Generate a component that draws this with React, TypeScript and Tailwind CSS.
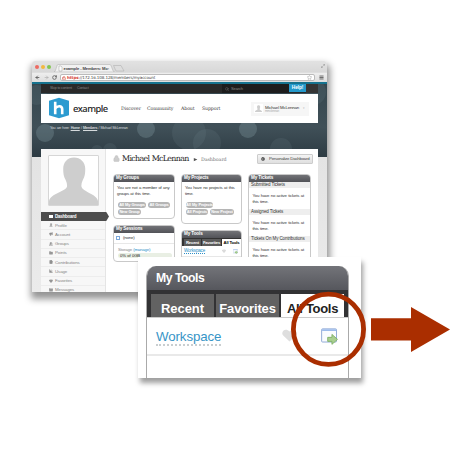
import React from "react";
import { Search, Star, Menu, Lock, Settings, Heart, User, Users, Folder, Megaphone, BarChart3, Mail, FileText, ArrowLeft, ArrowRight, RotateCw, Maximize2 } from "lucide-react";

function Panel({ title, className, children }: { title: string; className?: string; children: React.ReactNode }) {
  return (
    <section className={"overflow-hidden rounded-[4px] border border-[#c9c9c9] bg-white " + (className ?? "")}>
      <h3 className="-mx-px -mt-px h-[8px] bg-linear-to-b from-[#77787c] to-[#525358] pl-[3px] text-[4.6px] leading-[8px] font-bold tracking-[-0.12px] text-white">
        {title}
      </h3>
      {children}
    </section>
  );
}

function Pill({ children, className }: { children: string; className: string }) {
  return (
    <span className={"h-[6px] rounded-full bg-[#b5b5b5] text-center text-[4px] leading-[6px] font-bold tracking-[-0.16px] whitespace-nowrap text-white [word-spacing:0.3px] " + className}>
      {children}
    </span>
  );
}

function LaunchIcon({ className }: { className: string }) {
  return (
    <svg viewBox="0 0 16 16" className={className}>
      <rect x="0.6" y="0.8" width="14" height="12.4" rx="0.8" fill="#fafcff" stroke="#8fa9d6" strokeWidth="0.9" />
      <path d="M1 2h13.2" stroke="#9dbcec" strokeWidth="1.8" />
      <path d="M6.3 8.8h4V6l5.2 4.7-5.2 4.7v-2.8h-4z" fill="#a9cf91" stroke="#7bae60" strokeWidth="0.8" />
    </svg>
  );
}

const sideItems = [
  { name: "Profile", Icon: User },
  { name: "Account", Icon: Megaphone },
  { name: "Groups", Icon: Users },
  { name: "Points", Icon: Folder },
  { name: "Contributions", Icon: FileText },
  { name: "Usage", Icon: BarChart3 },
  { name: "Favorites", Icon: Heart },
  { name: "Messages", Icon: Mail },
];

function Person({ className }: { className: string }) {
  return (
    <svg viewBox="0 0 50 49" preserveAspectRatio="none" className={className}>
      <path d="M0 49v-4c1-4 5-6 9-8 6-3 9-4 9.500-7 0-2-.5-4-1.500-6-2-3-2.500-7-2.500-11C14.500 6 19 1.500 25.500 1.500S37 6 37 13c0 4-.5 8-2.500 11-1 2-1.500 4-1.500 6 .5 3 3 4 8 7 4 2 8 4 9 8v4z" fill="#cecece" />
    </svg>
  );
}

function Chrome() {
  return (
    <div className="h-[21px] bg-linear-to-b from-[#e2e2e2] to-[#cfcfcf]">
      <div className="flex h-[11px] items-end pl-[3px]">
        <div className="mb-[3px] flex gap-[2px]">
          <i className="size-[4px] rounded-full bg-[#ed6b62]" />
          <i className="size-[4px] rounded-full bg-[#f3b93f]" />
          <i className="size-[4px] rounded-full bg-[#84c652]" />
        </div>
        <svg viewBox="0 0 72 9" className="ml-[3px] h-[9px] w-[72px]">
          <path d="M0 9c2 0 2.500-7.500 4-7.500h52c1.500 0 2.500 7.500 4.500 7.500z" fill="#f1f1f1" stroke="#aaa" strokeWidth="0.5" />
          <path d="M59.500 2.500h7.500l3 5.500h-8z" fill="#dedede" stroke="#aaa" strokeWidth="0.5" />
          <path d="M5 3h2l1 1v4H5z" fill="white" stroke="#888" strokeWidth="0.4" />
          <text x="9.500" y="7" fontSize="4.200" letterSpacing="-0.150" fontWeight="bold" fill="#444">example - Members: Mc</text>
          <text x="53" y="7" fontSize="4" fill="#777">×</text>
        </svg>
        <Maximize2 className="mr-[2px] mb-[4px] ml-auto size-[4px] text-[#777]" />
      </div>
      <div className="flex h-[10px] items-center border-t border-[#dedede] bg-linear-to-b from-[#eee] to-[#dedede] px-[3px]">
        <ArrowLeft className="size-[5px] text-[#555]" strokeWidth={4} />
        <ArrowRight className="ml-[4px] size-[5px] text-[#aaa]" strokeWidth={3} />
        <RotateCw className="ml-[3px] size-[5px] text-[#555]" strokeWidth={3.5} />
        <div className="ml-[3px] flex h-[7px] flex-1 items-center rounded-[2px] border-[0.5px] border-[#bbb] bg-white pr-[2px] pl-px font-['DejaVu_Sans'] text-[4.1px] leading-[7px] tracking-[-0.14px] text-[#444]">
          <Lock className="mr-px size-[4px] text-[#d24c43]" strokeWidth={3} />
          <b className="text-[#d7453c]">https</b>
          <span>://172.16.108.128/members/myaccount</span>
          <Star className="ml-auto size-[5px] text-[#888]" />
        </div>
        <Menu className="ml-[4px] size-[5px] text-[#555]" strokeWidth={4} />
      </div>
    </div>
  );
}

function SiteHeader() {
  return (
    <>
      <div className="-mx-[9px] h-[2px] bg-[#16738f]" />
      <div className="flex h-[9px] bg-[#292929] pl-[9px] text-[3.6px] leading-[9px] tracking-[-0.12px] whitespace-nowrap text-[#888]">
        <span className="w-[27px]">Skip to content</span>
        <span>Contact</span>
        <div className="ml-auto flex w-[67px] items-center bg-[#1d1d1d] pl-[3px] text-[4px]">
          <Search className="mr-[2px] size-[4px]" />
          Search
        </div>
        <b className="h-[8px] w-[17px] bg-[#2499cb] text-center text-[4.8px] leading-[8px] text-white">Help!</b>
        <div className="w-[12px] bg-[#343434]" />
      </div>
      <header className="mt-px flex h-[29px] items-center bg-white pl-[7px]">
        <svg viewBox="0 0 22 22" className="mt-[-1px] h-[22px] w-[22px]">
          <path d="M1 3.800 11 .8l10 3v14.400l-10 3-10-3z" fill="#2c9bd0" />
          <path d="M7.200 4.800v12.400M7.200 11.400c2-2.900 7-3.100 7 .8v5" fill="none" stroke="white" strokeWidth="2.600" />
        </svg>
        <span className="ml-[3px] w-[48px] font-['Noto_Sans'] text-[9.4px] leading-[16px] font-medium tracking-[-0.5px] text-[#222]">example</span>
        <nav className="flex gap-[7px] font-['DejaVu_Serif'] text-[4.7px] leading-[8px] tracking-[-0.12px] text-[#444]">
          <span className="w-[19px]">Discover</span>
          <span className="w-[27px]">Community</span>
          <span className="w-[14px]">About</span>
          <span>Support</span>
        </nav>
        <div className="mr-[9px] ml-auto flex h-[14px] w-[58px] items-center bg-[#f6f6f6] pl-[3px]">
          <Person className="size-[9px] shrink-0 border border-white bg-white" />
          <div className="ml-[2px] text-[4.4px] leading-[5px] tracking-[-0.17px] whitespace-nowrap text-[#333]">
            <div>Michael McLennan</div>
            <div className="text-[3px] leading-[3px] text-[#aaa]">mmclennan</div>
          </div>
          <span className="mr-[4px] ml-auto text-[3px] text-[#bbb]">▾</span>
        </div>
      </header>
      <p className="h-[26px] pt-[2px] pl-[9px] text-[3.7px] leading-[7px] tracking-[-0.28px] whitespace-nowrap text-[#d5dadc] [word-spacing:0.5px]">
        You are here: <b className="underline">Home</b> / <b className="underline">Members</b> / Michael McLennan
      </p>
    </>
  );
}

function Sidebar() {
  return (
    <aside className="relative z-10 w-[65px] shrink-0 border-r border-[#e5e5e5] bg-[#f7f7f7]">
      <div className="mt-[6px] ml-[7px] h-[51px] w-[51px] rounded-[1px] border border-[#d6d6d6] bg-white">
        <Person className="h-[49px] w-full" />
      </div>
      <div className="mt-[6px] flex h-[9px] w-[68px] items-center bg-[#4d4d4d] pl-[8px] text-[4.5px] leading-[9px] font-bold tracking-[-0.26px] text-white [clip-path:polygon(0_0,96%_0,100%_50%,96%_100%,0_100%)]">
        <i className="mr-[2px] h-[3px] w-[4px] bg-white" />
        Dashboard
      </div>
      {sideItems.map(({ name, Icon }) => (
        <div key={name} className="flex h-[9.25px] items-center border-b-[0.5px] border-[#ededed] pl-[8px] text-[4.4px] leading-[9px] tracking-[-0.1px] text-[#858585]">
          <Icon className="mr-[2px] size-[4px] fill-[#999]" />
          {name}
        </div>
      ))}
    </aside>
  );
}

function TicketSection({ title }: { title: string }) {
  return (
    <>
      <h4 className="mt-px h-[6px] bg-[#eee] pl-[2px] text-[4.5px] leading-[6px] tracking-[-0.1px] whitespace-nowrap text-[#333]">{title}</h4>
      <p className="h-[20px] pt-[5px] pl-[3.5px] text-[4.3px] leading-[6px] tracking-[-0.16px] whitespace-nowrap text-[#333] [word-spacing:0.35px]">
        You have no active tickets at<br />this time.
      </p>
    </>
  );
}

function Dashboard() {
  return (
    <main className="w-[212px] shrink-0 bg-white pl-[7px]">
      <div className="flex h-[25px] items-start pt-[5px]">
        <Lock className="mt-[1px] size-[7px] fill-[#ccc] text-[#c4c4c4]" />
        <h1 className="ml-[2px] w-[71px] font-['DejaVu_Serif'] text-[7.9px] leading-[10px] tracking-[-0.68px] whitespace-nowrap text-[#222] [word-spacing:0.6px]">Michael McLennan</h1>
        <svg viewBox="0 0 8 11" className="h-[11px] w-[8px]">
          <path d="M0.800 4v3.200l3.600-1.600z" fill="#555" />
        </svg>
        <span className="font-['DejaVu_Serif'] text-[4.8px] leading-[11px] tracking-[-0.1px] text-[#777]">Dashboard</span>
        <button className="mr-[5px] ml-auto flex h-[10px] w-[56px] items-center rounded-[1px] border border-[#ccc] bg-linear-to-b from-[#f4f4f4] to-[#dfdfdf] pl-[3px] text-[4.3px] leading-[8px] tracking-[-0.2px] whitespace-nowrap text-[#444]">
          <Settings className="mr-[4px] size-[4px] shrink-0" strokeWidth={5} />
          Personalize Dashboard
        </button>
      </div>
      <div className="flex items-start gap-[6px]">
        <div className="flex w-[62px] flex-col gap-[6px]">
          <Panel title="My Groups" className="h-[45px]">
            <p className="pt-[3px] pl-[3px] text-[4.3px] leading-[6px] tracking-[-0.22px] whitespace-nowrap text-[#333] [word-spacing:0.5px]">You are not a member of any<br />groups at this time.</p>
            <div className="mt-[5px] flex flex-wrap gap-[2px] gap-y-px pl-[4px]">
              <Pill className="w-[28px]">All My Groups</Pill>
              <Pill className="w-[22px]">All Groups</Pill>
              <Pill className="w-[23px]">New Group</Pill>
            </div>
          </Panel>
          <Panel title="My Sessions" className="h-[37px]">
            <div className="flex h-[11px] items-center border-b border-[#e8e8e8] pl-[2px] text-[4.4px] tracking-[-0.2px] text-[#333]">
              <i className="mr-[3px] size-[4px] border-[0.5px] border-t-[1.5px] border-[#7da9db]" />
              (none)
            </div>
            <p className="pt-[3px] pl-[4px] text-[4.3px] leading-[6px] tracking-[-0.14px] text-[#888]">Storage <span className="text-[#2d91c8]">(manage)</span></p>
            <p className="ml-[4px] h-[5px] w-[54px] rounded-full bg-[#e9efe4] pl-[2px] text-[4.2px] leading-[5px] tracking-[-0.14px] text-[#222] [word-spacing:0.5px]">0% of 0GB</p>
          </Panel>
        </div>
        <div className="flex w-[61px] flex-col gap-[6px]">
          <Panel title="My Projects" className="h-[50px]">
            <p className="pt-[3px] pl-[3px] text-[4.3px] leading-[6px] tracking-[-0.2px] whitespace-nowrap text-[#333] [word-spacing:0.5px]">You have no projects at this<br />time.</p>
            <div className="mt-[5px] flex flex-wrap gap-[2px] gap-y-px pl-[4px]">
              <Pill className="mr-[20px] w-[27px]">All My Projects</Pill>
              <Pill className="w-[22px]">All Projects</Pill>
              <Pill className="w-[24px]">New Project</Pill>
            </div>
          </Panel>
          <Panel title="My Tools" className="h-[40px]">
            <div className="flex h-[8px] items-end gap-px bg-[#333] pl-[2px] text-center text-[4.2px] leading-[7px] font-bold tracking-[-0.16px] whitespace-nowrap text-white">
              <span className="w-[17px] bg-[#5b5b5b]">Recent</span>
              <span className="w-[19px] bg-[#5b5b5b]">Favorites</span>
              <span className="w-[19px] bg-white text-black">All Tools</span>
            </div>
            <div className="flex h-[11px] items-center border-b border-[#e8e8e8] pl-[2px] text-[4.5px] tracking-[-0.15px] text-[#2d91c8]">
              <span className="underline decoration-dotted">Workspace</span>
              <Heart className="mr-[7px] ml-auto size-[4px] fill-[#ddd] text-[#ccc]" />
              <LaunchIcon className="mr-[3px] size-[5px]" />
            </div>
          </Panel>
        </div>
        <Panel title="My Tickets" className="h-[110px] w-[63px]">
          <div className="-mt-px">
            <TicketSection title="Submitted Tickets" />
            <TicketSection title="Assigned Tickets" />
            <TicketSection title="Tickets On My Contributions" />
          </div>
        </Panel>
      </div>
    </main>
  );
}

function BrowserWindow() {
  return (
    <div className="absolute top-[61px] left-[32px] h-[231px] w-[295px] overflow-hidden rounded-t-[3px] shadow-[1px_5px_7px_2px_rgba(0,0,0,0.42)]">
      <Chrome />
      <div className="relative h-[210px] bg-[linear-gradient(#34464e_0px,#405058_45px,#2d3b43_75px,#e3e3e3_75px,#ebebeb_210px)] px-[9px]">
        <svg viewBox="0 0 295 75" className="absolute top-0 left-0 h-[75px] w-[295px]">
          <g fill="#839da4" fillOpacity="0.13">
            <circle cx="5" cy="13" r="10" />
            <circle cx="157" cy="51" r="17" />
            <circle cx="175" cy="61" r="14" />
            <circle cx="281" cy="10" r="13" />
            <circle cx="65" cy="69" r="6" />
            <circle cx="78" cy="68" r="7" />
            <circle cx="249" cy="67" r="11" />
          </g>
          <g fill="#8fa9b0" fillOpacity="0.27">
            <circle cx="13" cy="51" r="9" />
            <circle cx="114" cy="47" r="9" />
            <circle cx="216" cy="47" r="9" />
          </g>
        </svg>
        <div className="relative">
          <SiteHeader />
          <div className="flex h-[143px]">
            <Sidebar />
            <Dashboard />
          </div>
        </div>
      </div>
    </div>
  );
}

function ToolsZoom() {
  return (
    <div className="absolute top-[257px] left-[138px] h-[121px] w-[223px] overflow-hidden bg-white pt-[9px] pr-[12px] pl-[8px] shadow-[2px_5px_5px_rgba(0,0,0,0.38)]">
      <div className="h-[140px] overflow-hidden rounded-t-[10px] border-x border-[#aaa]">
        <h2 className="-mx-px h-[24px] bg-linear-to-b from-[#737479] to-[#56575d] pl-[10px] text-[12.2px] leading-[24px] font-bold tracking-[-0.45px] text-white">My Tools</h2>
        <div className="-mx-px flex h-[28px] items-end gap-[2px] border-b border-[#ccc] bg-[#323234] pl-[5px] text-center text-[13px] leading-[30px] font-bold text-white">
          <span className="h-[23px] w-[63px] bg-[#626262] tracking-[-0.05px]">Recent</span>
          <span className="h-[23px] w-[63px] bg-[#626262] tracking-[-0.15px]">Favorites</span>
          <span className="h-[23px] w-[63px] bg-white tracking-[-0.3px] text-[#222]">All Tools</span>
        </div>
        <div className="flex h-[38px] items-start border-b-2 border-[#e9e9e9] pt-[10px] pl-[9px]">
          <span className="h-[18px] w-[65px] border-b-2 border-dotted border-[#c9ced0] text-[13.3px] leading-[18px] tracking-[-0.1px] text-[#3795c7]">Workspace</span>
          <svg viewBox="0 0 16 14" className="mt-px ml-[61px] h-[13px] w-[15px]">
            <path d="M8 13.500 1.200 7C-2 3.500 3.200-2 8 2.600 12.800-2 18 3.500 14.800 7z" fill="#dedede" />
          </svg>
          <LaunchIcon className="ml-[24px] h-[17px] w-[17px]" />
        </div>
      </div>
    </div>
  );
}

export default function App() {
  return (
    <div className="relative h-[450px] w-[450px] overflow-hidden bg-white font-['Liberation_Sans',sans-serif]">
      <BrowserWindow />
      <ToolsZoom />
      <svg viewBox="0 0 450 450" className="absolute inset-0 size-full">
        <circle cx="328.500" cy="329.300" r="35.100" fill="none" stroke="#aa2e00" strokeWidth="4.800" />
        <path d="M371 318.300h40V307l39 22.600-39 22.400v-11.500h-40z" fill="#aa2e00" />
      </svg>
    </div>
  );
}
